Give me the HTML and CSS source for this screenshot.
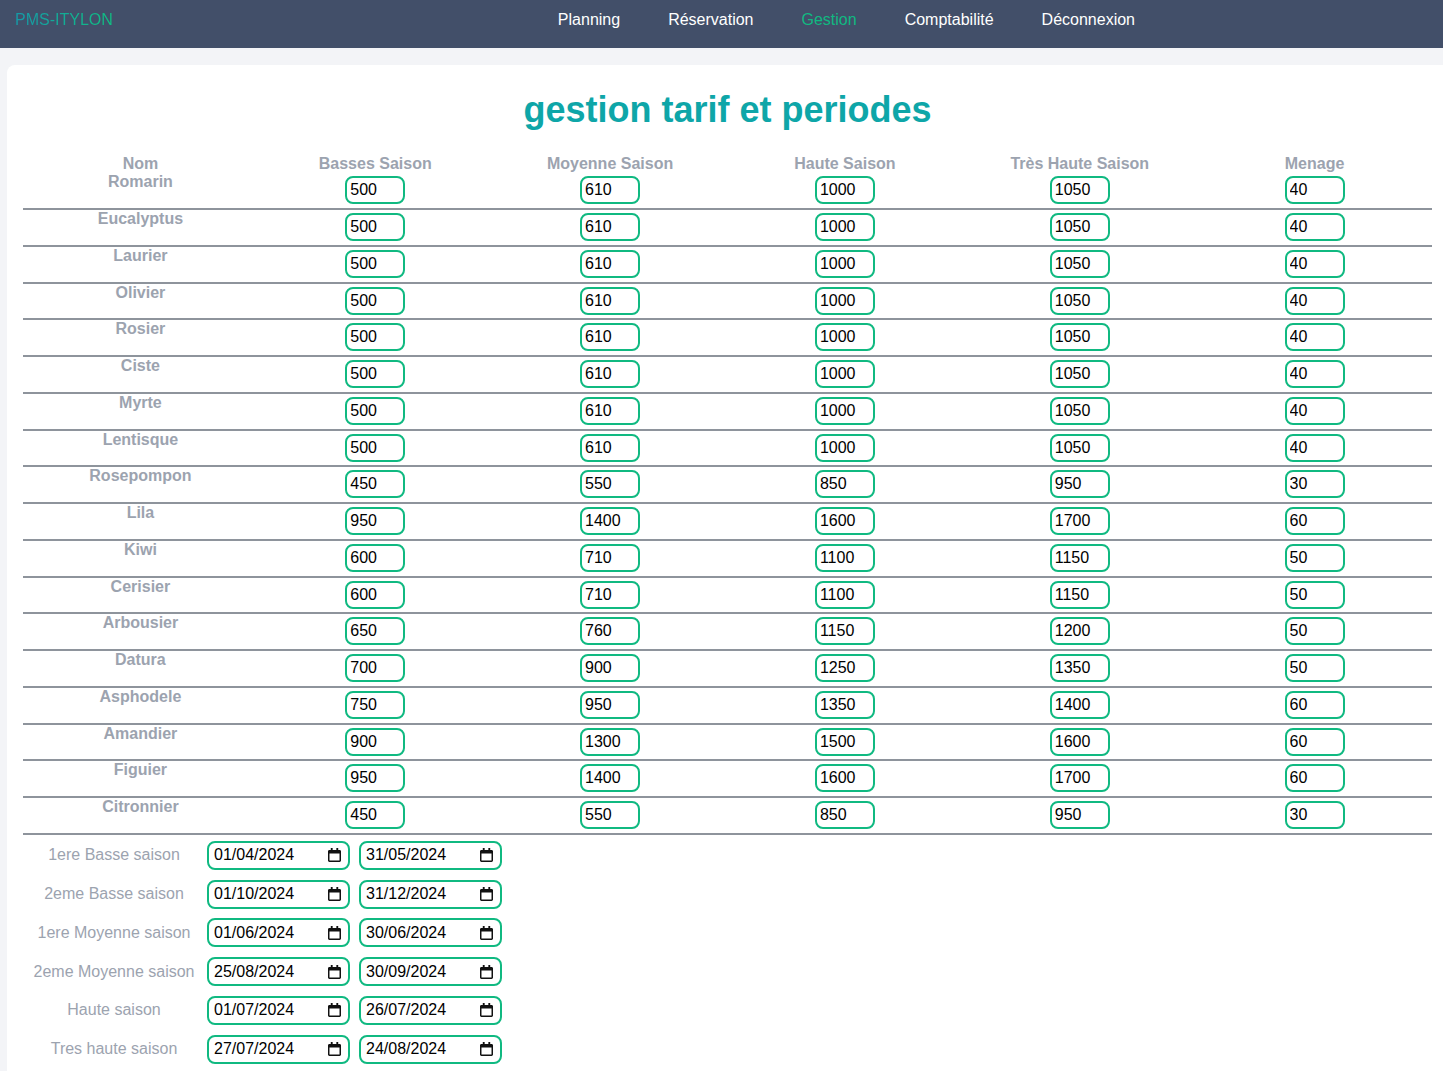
FILE: index.html
```html
<!DOCTYPE html>
<html lang="fr">
<head>
<meta charset="utf-8">
<title>PMS-ITYLON – gestion tarif et periodes</title>
<link rel="stylesheet" href="styles.css">
</head>
<body>
<nav class="nav">
  <span class="logo">PMS-ITYLON</span>
  <ul class="links">
    <li>Planning</li>
    <li>Réservation</li>
    <li class="active">Gestion</li>
    <li>Comptabilité</li>
    <li>Déconnexion</li>
  </ul>
</nav>
<main class="card">
  <h1 class="title">gestion tarif et periodes</h1>
  <div class="tarifs">
    <div class="row head">
      <div class="name"><div>Nom</div><div>Romarin</div></div>
      <div class="cell"><div class="lab">Basses Saison</div><input class="price" type="text" value="500"></div>
      <div class="cell"><div class="lab">Moyenne Saison</div><input class="price" type="text" value="610"></div>
      <div class="cell"><div class="lab">Haute Saison</div><input class="price" type="text" value="1000"></div>
      <div class="cell"><div class="lab">Très Haute Saison</div><input class="price" type="text" value="1050"></div>
      <div class="cell"><div class="lab">Menage</div><input class="price" type="text" value="40"></div>
    </div>
    <div class="row"><div class="name">Eucalyptus</div><div class="cell"><input class="price" type="text" value="500"></div><div class="cell"><input class="price" type="text" value="610"></div><div class="cell"><input class="price" type="text" value="1000"></div><div class="cell"><input class="price" type="text" value="1050"></div><div class="cell"><input class="price" type="text" value="40"></div></div>
    <div class="row"><div class="name">Laurier</div><div class="cell"><input class="price" type="text" value="500"></div><div class="cell"><input class="price" type="text" value="610"></div><div class="cell"><input class="price" type="text" value="1000"></div><div class="cell"><input class="price" type="text" value="1050"></div><div class="cell"><input class="price" type="text" value="40"></div></div>
    <div class="row"><div class="name">Olivier</div><div class="cell"><input class="price" type="text" value="500"></div><div class="cell"><input class="price" type="text" value="610"></div><div class="cell"><input class="price" type="text" value="1000"></div><div class="cell"><input class="price" type="text" value="1050"></div><div class="cell"><input class="price" type="text" value="40"></div></div>
    <div class="row"><div class="name">Rosier</div><div class="cell"><input class="price" type="text" value="500"></div><div class="cell"><input class="price" type="text" value="610"></div><div class="cell"><input class="price" type="text" value="1000"></div><div class="cell"><input class="price" type="text" value="1050"></div><div class="cell"><input class="price" type="text" value="40"></div></div>
    <div class="row"><div class="name">Ciste</div><div class="cell"><input class="price" type="text" value="500"></div><div class="cell"><input class="price" type="text" value="610"></div><div class="cell"><input class="price" type="text" value="1000"></div><div class="cell"><input class="price" type="text" value="1050"></div><div class="cell"><input class="price" type="text" value="40"></div></div>
    <div class="row"><div class="name">Myrte</div><div class="cell"><input class="price" type="text" value="500"></div><div class="cell"><input class="price" type="text" value="610"></div><div class="cell"><input class="price" type="text" value="1000"></div><div class="cell"><input class="price" type="text" value="1050"></div><div class="cell"><input class="price" type="text" value="40"></div></div>
    <div class="row"><div class="name">Lentisque</div><div class="cell"><input class="price" type="text" value="500"></div><div class="cell"><input class="price" type="text" value="610"></div><div class="cell"><input class="price" type="text" value="1000"></div><div class="cell"><input class="price" type="text" value="1050"></div><div class="cell"><input class="price" type="text" value="40"></div></div>
    <div class="row"><div class="name">Rosepompon</div><div class="cell"><input class="price" type="text" value="450"></div><div class="cell"><input class="price" type="text" value="550"></div><div class="cell"><input class="price" type="text" value="850"></div><div class="cell"><input class="price" type="text" value="950"></div><div class="cell"><input class="price" type="text" value="30"></div></div>
    <div class="row"><div class="name">Lila</div><div class="cell"><input class="price" type="text" value="950"></div><div class="cell"><input class="price" type="text" value="1400"></div><div class="cell"><input class="price" type="text" value="1600"></div><div class="cell"><input class="price" type="text" value="1700"></div><div class="cell"><input class="price" type="text" value="60"></div></div>
    <div class="row"><div class="name">Kiwi</div><div class="cell"><input class="price" type="text" value="600"></div><div class="cell"><input class="price" type="text" value="710"></div><div class="cell"><input class="price" type="text" value="1100"></div><div class="cell"><input class="price" type="text" value="1150"></div><div class="cell"><input class="price" type="text" value="50"></div></div>
    <div class="row"><div class="name">Cerisier</div><div class="cell"><input class="price" type="text" value="600"></div><div class="cell"><input class="price" type="text" value="710"></div><div class="cell"><input class="price" type="text" value="1100"></div><div class="cell"><input class="price" type="text" value="1150"></div><div class="cell"><input class="price" type="text" value="50"></div></div>
    <div class="row"><div class="name">Arbousier</div><div class="cell"><input class="price" type="text" value="650"></div><div class="cell"><input class="price" type="text" value="760"></div><div class="cell"><input class="price" type="text" value="1150"></div><div class="cell"><input class="price" type="text" value="1200"></div><div class="cell"><input class="price" type="text" value="50"></div></div>
    <div class="row"><div class="name">Datura</div><div class="cell"><input class="price" type="text" value="700"></div><div class="cell"><input class="price" type="text" value="900"></div><div class="cell"><input class="price" type="text" value="1250"></div><div class="cell"><input class="price" type="text" value="1350"></div><div class="cell"><input class="price" type="text" value="50"></div></div>
    <div class="row"><div class="name">Asphodele</div><div class="cell"><input class="price" type="text" value="750"></div><div class="cell"><input class="price" type="text" value="950"></div><div class="cell"><input class="price" type="text" value="1350"></div><div class="cell"><input class="price" type="text" value="1400"></div><div class="cell"><input class="price" type="text" value="60"></div></div>
    <div class="row"><div class="name">Amandier</div><div class="cell"><input class="price" type="text" value="900"></div><div class="cell"><input class="price" type="text" value="1300"></div><div class="cell"><input class="price" type="text" value="1500"></div><div class="cell"><input class="price" type="text" value="1600"></div><div class="cell"><input class="price" type="text" value="60"></div></div>
    <div class="row"><div class="name">Figuier</div><div class="cell"><input class="price" type="text" value="950"></div><div class="cell"><input class="price" type="text" value="1400"></div><div class="cell"><input class="price" type="text" value="1600"></div><div class="cell"><input class="price" type="text" value="1700"></div><div class="cell"><input class="price" type="text" value="60"></div></div>
    <div class="row"><div class="name">Citronnier</div><div class="cell"><input class="price" type="text" value="450"></div><div class="cell"><input class="price" type="text" value="550"></div><div class="cell"><input class="price" type="text" value="850"></div><div class="cell"><input class="price" type="text" value="950"></div><div class="cell"><input class="price" type="text" value="30"></div></div>
  </div>

  <div class="periodes">
    <div class="prow">
      <span class="plab">1ere Basse saison</span>
      <div class="date"><input type="text" value="01/04/2024"><svg class="cal" viewBox="0 0 14 15" width="14" height="15"><path d="M3 0h2v2h4V0h2v2h1.5C13.3 2 14 2.7 14 3.5v10c0 .8-.7 1.5-1.5 1.5h-11C.7 15 0 14.3 0 13.5v-10C0 2.7.7 2 1.5 2H3zM1.6 6v7.4h10.8V6z"/></svg></div>
      <div class="date"><input type="text" value="31/05/2024"><svg class="cal" viewBox="0 0 14 15" width="14" height="15"><path d="M3 0h2v2h4V0h2v2h1.5C13.3 2 14 2.7 14 3.5v10c0 .8-.7 1.5-1.5 1.5h-11C.7 15 0 14.3 0 13.5v-10C0 2.7.7 2 1.5 2H3zM1.6 6v7.4h10.8V6z"/></svg></div>
    </div>
    <div class="prow">
      <span class="plab">2eme Basse saison</span>
      <div class="date"><input type="text" value="01/10/2024"><svg class="cal" viewBox="0 0 14 15" width="14" height="15"><path d="M3 0h2v2h4V0h2v2h1.5C13.3 2 14 2.7 14 3.5v10c0 .8-.7 1.5-1.5 1.5h-11C.7 15 0 14.3 0 13.5v-10C0 2.7.7 2 1.5 2H3zM1.6 6v7.4h10.8V6z"/></svg></div>
      <div class="date"><input type="text" value="31/12/2024"><svg class="cal" viewBox="0 0 14 15" width="14" height="15"><path d="M3 0h2v2h4V0h2v2h1.5C13.3 2 14 2.7 14 3.5v10c0 .8-.7 1.5-1.5 1.5h-11C.7 15 0 14.3 0 13.5v-10C0 2.7.7 2 1.5 2H3zM1.6 6v7.4h10.8V6z"/></svg></div>
    </div>
    <div class="prow">
      <span class="plab">1ere Moyenne saison</span>
      <div class="date"><input type="text" value="01/06/2024"><svg class="cal" viewBox="0 0 14 15" width="14" height="15"><path d="M3 0h2v2h4V0h2v2h1.5C13.3 2 14 2.7 14 3.5v10c0 .8-.7 1.5-1.5 1.5h-11C.7 15 0 14.3 0 13.5v-10C0 2.7.7 2 1.5 2H3zM1.6 6v7.4h10.8V6z"/></svg></div>
      <div class="date"><input type="text" value="30/06/2024"><svg class="cal" viewBox="0 0 14 15" width="14" height="15"><path d="M3 0h2v2h4V0h2v2h1.5C13.3 2 14 2.7 14 3.5v10c0 .8-.7 1.5-1.5 1.5h-11C.7 15 0 14.3 0 13.5v-10C0 2.7.7 2 1.5 2H3zM1.6 6v7.4h10.8V6z"/></svg></div>
    </div>
    <div class="prow">
      <span class="plab">2eme Moyenne saison</span>
      <div class="date"><input type="text" value="25/08/2024"><svg class="cal" viewBox="0 0 14 15" width="14" height="15"><path d="M3 0h2v2h4V0h2v2h1.5C13.3 2 14 2.7 14 3.5v10c0 .8-.7 1.5-1.5 1.5h-11C.7 15 0 14.3 0 13.5v-10C0 2.7.7 2 1.5 2H3zM1.6 6v7.4h10.8V6z"/></svg></div>
      <div class="date"><input type="text" value="30/09/2024"><svg class="cal" viewBox="0 0 14 15" width="14" height="15"><path d="M3 0h2v2h4V0h2v2h1.5C13.3 2 14 2.7 14 3.5v10c0 .8-.7 1.5-1.5 1.5h-11C.7 15 0 14.3 0 13.5v-10C0 2.7.7 2 1.5 2H3zM1.6 6v7.4h10.8V6z"/></svg></div>
    </div>
    <div class="prow">
      <span class="plab">Haute saison</span>
      <div class="date"><input type="text" value="01/07/2024"><svg class="cal" viewBox="0 0 14 15" width="14" height="15"><path d="M3 0h2v2h4V0h2v2h1.5C13.3 2 14 2.7 14 3.5v10c0 .8-.7 1.5-1.5 1.5h-11C.7 15 0 14.3 0 13.5v-10C0 2.7.7 2 1.5 2H3zM1.6 6v7.4h10.8V6z"/></svg></div>
      <div class="date"><input type="text" value="26/07/2024"><svg class="cal" viewBox="0 0 14 15" width="14" height="15"><path d="M3 0h2v2h4V0h2v2h1.5C13.3 2 14 2.7 14 3.5v10c0 .8-.7 1.5-1.5 1.5h-11C.7 15 0 14.3 0 13.5v-10C0 2.7.7 2 1.5 2H3zM1.6 6v7.4h10.8V6z"/></svg></div>
    </div>
    <div class="prow">
      <span class="plab">Tres haute saison</span>
      <div class="date"><input type="text" value="27/07/2024"><svg class="cal" viewBox="0 0 14 15" width="14" height="15"><path d="M3 0h2v2h4V0h2v2h1.5C13.3 2 14 2.7 14 3.5v10c0 .8-.7 1.5-1.5 1.5h-11C.7 15 0 14.3 0 13.5v-10C0 2.7.7 2 1.5 2H3zM1.6 6v7.4h10.8V6z"/></svg></div>
      <div class="date"><input type="text" value="24/08/2024"><svg class="cal" viewBox="0 0 14 15" width="14" height="15"><path d="M3 0h2v2h4V0h2v2h1.5C13.3 2 14 2.7 14 3.5v10c0 .8-.7 1.5-1.5 1.5h-11C.7 15 0 14.3 0 13.5v-10C0 2.7.7 2 1.5 2H3zM1.6 6v7.4h10.8V6z"/></svg></div>
    </div>
  </div>
</main>
</body>
</html>
```

FILE: styles.css
```css
html {
  scrollbar-width: none;
}
html::-webkit-scrollbar {
  display: none;
}
body {
  margin: 0;
  background: #f3f4f7;
  font-family: "Liberation Sans", Arial, sans-serif;
  font-size: 16px;
  overflow-x: hidden;
}

.nav {
  height: 48px;
  background: #424f69;
  display: flex;
  align-items: flex-start;
  padding: 11px 0 0 15px;
  box-sizing: border-box;
}
.logo {
  line-height: 18px;
  background: linear-gradient(90deg, #169aa8, #10bf82);
  -webkit-background-clip: text;
  background-clip: text;
  color: transparent;
}
.links {
  list-style: none;
  margin: 0 308px 0 auto;
  padding: 0;
  display: flex;
  gap: 48px;
  line-height: 18px;
  color: #ffffff;
}
.links .active {
  color: #10b981;
}

.card {
  display: block;
  margin: 17px 0 0 7px;
  width: 1441px;
  box-sizing: border-box;
  background: #ffffff;
  border-radius: 8px 0 0 0;
  padding: 24px 16px 20px 16px;
}
.title {
  margin: 0 0 25px;
  text-align: center;
  font-size: 36px;
  font-weight: bold;
  line-height: 41px;
  color: #0ea6a8;
}

.tarifs {
  width: 1409px;
}
.row {
  display: grid;
  grid-template-columns: repeat(6, 1fr);
  height: 36.75px;
  box-sizing: border-box;
  border-bottom: 2px solid #8e949c;
}
.row.head {
  height: 55px;
}
.name {
  text-align: center;
  font-weight: bold;
  color: #9ca3af;
  line-height: 18.4px;
}
.cell {
  display: flex;
  flex-direction: column;
  align-items: center;
  padding-top: 3px;
}
.head .cell {
  padding-top: 0;
}
.lab {
  font-weight: bold;
  color: #9ca3af;
  line-height: 18.4px;
  margin-bottom: 3px;
  white-space: nowrap;
}
.price {
  width: 60px;
  height: 28px;
  box-sizing: border-box;
  border: 2px solid #10b981;
  border-radius: 8px;
  padding: 0 2px 0 3px;
  margin: 0;
  font-family: "Liberation Sans", Arial, sans-serif;
  font-size: 16px;
  color: #000000;
  background: #ffffff;
  outline: none;
}

.periodes {
  display: flex;
  flex-direction: column;
  gap: 9.8px;
  padding-top: 6px;
}
.prow {
  display: flex;
  align-items: center;
  gap: 9px;
}
.plab {
  width: 182px;
  margin-right: -7px;
  text-align: center;
  color: #9ca3af;
  white-space: nowrap;
}
.date {
  width: 143px;
  height: 29px;
  box-sizing: border-box;
  border: 2px solid #10b981;
  border-radius: 8px;
  display: flex;
  align-items: center;
  padding: 0 7px 0 5px;
  background: #ffffff;
}
.date input {
  flex: 1;
  min-width: 0;
  border: 0;
  padding: 0;
  margin: 0;
  font-family: "Liberation Sans", Arial, sans-serif;
  font-size: 16px;
  color: #000000;
  background: transparent;
  outline: none;
}
.cal {
  flex: none;
  width: 13px;
  height: 14px;
  fill: #111111;
}
```
